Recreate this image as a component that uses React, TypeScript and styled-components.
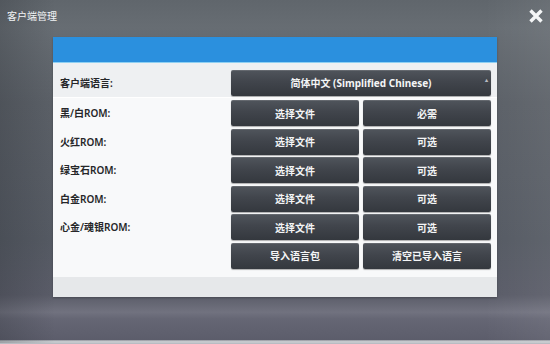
import * as React from 'react';
import styled, { createGlobalStyle } from 'styled-components';

const GlobalStyle = createGlobalStyle`
  html, body {
    margin: 0;
    padding: 0;
    width: 550px;
    height: 344px;
    overflow: hidden;
  }
  body {
    font-family: "Noto Sans", "Noto Sans CJK SC", sans-serif;
  }
`;

const Screen = styled.div`
  width: 550px;
  height: 344px;
  box-sizing: border-box;
  display: flex;
  flex-direction: column;
  background:
    linear-gradient(90deg, rgba(40, 44, 50, 0.25) 0%, rgba(0, 0, 0, 0) 10%, rgba(0, 0, 0, 0) 88%, rgba(255, 255, 255, 0.06) 100%),
    linear-gradient(180deg, #60666c 0%, #676d73 8%, #5b6067 30%, #555a63 70%, #5a5c68 86%, #71727f 91%, #656674 93%, #5c5d6b 99%, #c4c8cc 99.4%);
  border-bottom: 1px solid #b8bcc2;
`;

const TitleBar = styled.div`
  height: 37px;
  display: flex;
  align-items: flex-start;
  justify-content: space-between;
  padding: 0 5px 0 7px;
`;

const Title = styled.span`
  margin-top: 9px;
  color: #f2f4f6;
  font-size: 10px;
  line-height: 14px;
`;

const CloseButton = styled.button`
  margin-top: 7px;
  width: 18px;
  height: 18px;
  padding: 0;
  border: 0;
  background: none;
  display: flex;
  align-items: center;
  justify-content: center;
  cursor: pointer;
`;

const Panel = styled.div`
  margin-left: 53px;
  width: 444px;
  height: 260px;
  display: flex;
  flex-direction: column;
  background: #f8f9fa;
  box-shadow: 0 1px 2px rgba(0, 0, 0, 0.25);
`;

const PanelHeader = styled.div`
  height: 26px;
  background: #2b90de;
  border-bottom: 1px solid #8fd0f2;
`;

const PanelBody = styled.div`
  flex: 1;
  display: flex;
  flex-direction: column;
  gap: 2.5px;
  padding-bottom: 8px;
`;

const Row = styled.div<{ $shaded?: boolean }>`
  display: grid;
  grid-template-columns: 1fr 260px;
  align-items: center;
  padding: ${p => (p.$shaded ? '7px 6px 1px 7px' : '0 6px 0 7px')};
  background: ${p => (p.$shaded ? '#eef0f2' : 'transparent')};
  border-bottom: ${p => (p.$shaded ? '1px solid #ffffff' : '0')};
`;

const Label = styled.span`
  color: #262729;
  font-size: 10px;
  font-weight: 600;
  line-height: 26px;
`;

const ButtonGroup = styled.div<{ $cols: number }>`
  display: grid;
  grid-template-columns: repeat(${p => p.$cols}, 1fr);
  gap: 4px;
`;

const DarkButton = styled.button<{ $select?: boolean }>`
  position: relative;
  height: 26px;
  padding: 0;
  border: 0;
  border-radius: 2px;
  background: linear-gradient(180deg, #50555c 0%, #41454c 45%, #34383e 100%);
  box-shadow: inset 0 1px 0 rgba(255, 255, 255, 0.12), 0 1px 1px rgba(0, 0, 0, 0.3);
  color: #f4f5f6;
  font-family: "Noto Sans", "Noto Sans CJK SC", sans-serif;
  font-size: 10px;
  font-weight: 700;
  cursor: pointer;

  &::after {
    content: ${p => (p.$select ? "'▴'" : 'none')};
    position: absolute;
    right: 3px;
    top: 6px;
    font-size: 6px;
    color: #b8bcc0;
  }
`;

const Footer = styled.div`
  height: 21px;
  background: #e6e8ea;
`;

const roms = [
  { label: '黑/白ROM:', status: '必需' },
  { label: '火红ROM:', status: '可选' },
  { label: '绿宝石ROM:', status: '可选' },
  { label: '白金ROM:', status: '可选' },
  { label: '心金/魂银ROM:', status: '可选' },
];

const CloseIcon = () => (
  <svg width="16" height="16" viewBox="0 0 16 16">
    <path d="M2.5 2.5 L13.5 13.5 M13.5 2.5 L2.5 13.5" stroke="#f5f6f7" strokeWidth="3.4" strokeLinecap="butt" />
  </svg>
);

const App: React.FC = () => {
  return (
    <>
      <GlobalStyle />
      <Screen>
        <TitleBar>
          <Title>客户端管理</Title>
          <CloseButton aria-label="关闭">
            <CloseIcon />
          </CloseButton>
        </TitleBar>
        <Panel>
          <PanelHeader />
          <PanelBody>
            <Row $shaded>
              <Label>客户端语言:</Label>
              <ButtonGroup $cols={1}>
                <DarkButton $select>简体中文 (Simplified Chinese)</DarkButton>
              </ButtonGroup>
            </Row>
            {roms.map(rom => (
              <Row key={rom.label}>
                <Label>{rom.label}</Label>
                <ButtonGroup $cols={2}>
                  <DarkButton>选择文件</DarkButton>
                  <DarkButton>{rom.status}</DarkButton>
                </ButtonGroup>
              </Row>
            ))}
            <Row>
              <Label />
              <ButtonGroup $cols={2}>
                <DarkButton>导入语言包</DarkButton>
                <DarkButton>清空已导入语言</DarkButton>
              </ButtonGroup>
            </Row>
          </PanelBody>
          <Footer />
        </Panel>
      </Screen>
    </>
  );
};

export default App;
